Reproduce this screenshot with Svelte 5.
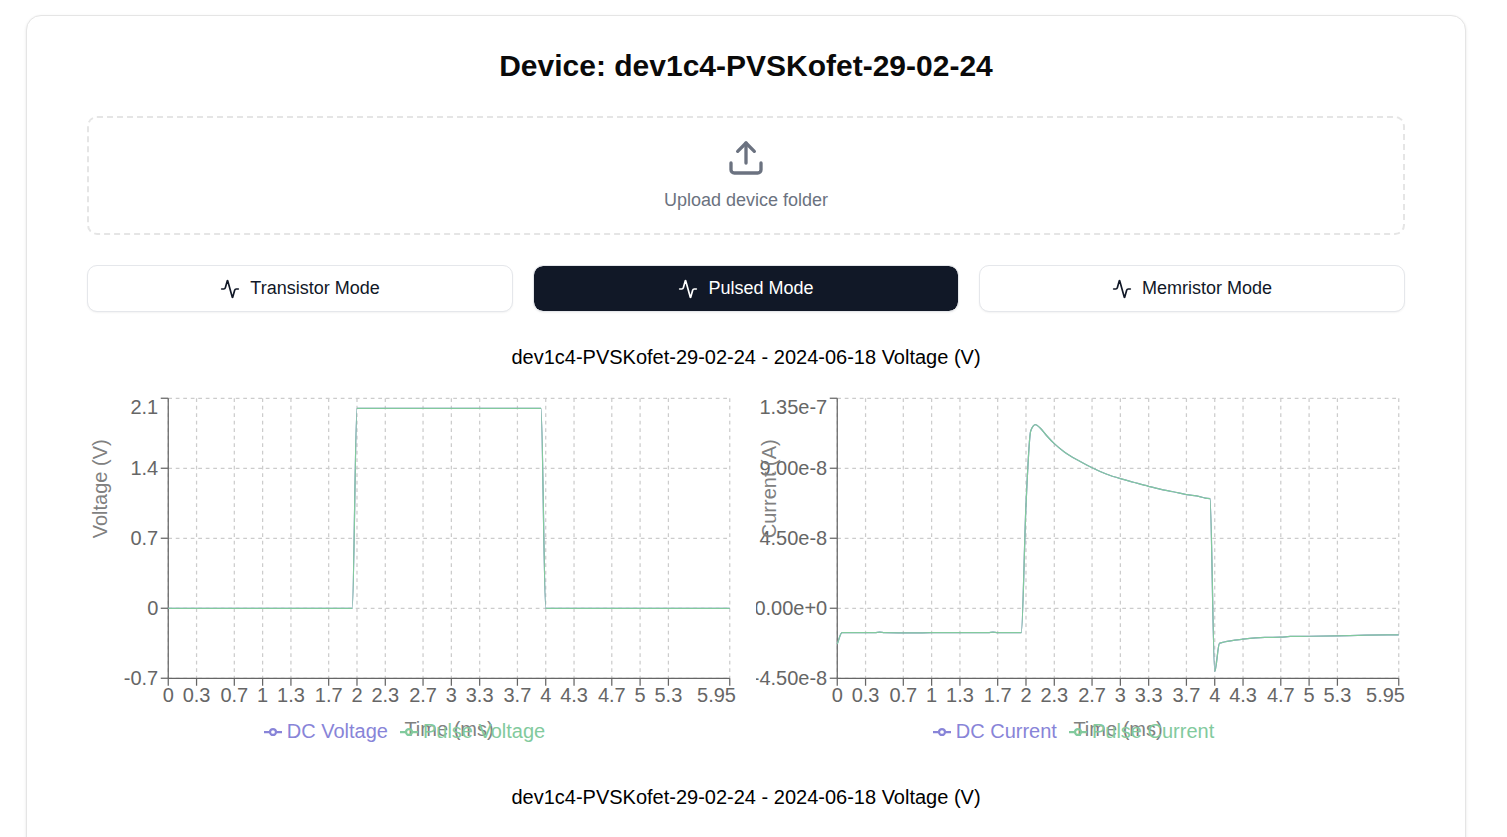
<script>
  const UNIT = 1.25;
  const CHART_HEIGHT = 300;
  const PLOT = { left: 65, top: 5, bottom: 229, right: 5 };
  const T_MAX = 5.95;
  const X_TICKS = [0, 0.3, 0.7, 1, 1.3, 1.7, 2, 2.3, 2.7, 3, 3.3, 3.7, 4, 4.3, 4.7, 5, 5.3, 5.95];

  const modes = ['Transistor Mode', 'Pulsed Mode', 'Memristor Mode'];
  let active = $state('Pulsed Mode');
  let chartWidth = $state(649);

  const charts = [
    {
      label: 'Voltage (V)',
      series: ['DC Voltage', 'Pulse Voltage'],
      min: -0.7,
      max: 2.1,
      yTicks: [[-0.7, '-0.7'], [0, '0'], [0.7, '0.7'], [1.4, '1.4'], [2.1, '2.1']],
      points: [[0, 0], [1.95, 0], [2, 2], [3.95, 2], [4, 0], [5.95, 0]]
    },
    {
      // values in units of 1e-8 A
      label: 'Current (A)',
      series: ['DC Current', 'Pulse Current'],
      min: -4.5,
      max: 13.5,
      yTicks: [[-4.5, '-4.50e-8'], [0, '0.00e+0'], [4.5, '4.50e-8'], [9, '9.00e-8'], [13.5, '1.35e-7']],
      points: [
        [0, -2.3], [0.05, -1.57], [0.4, -1.57], [0.45, -1.54], [0.5, -1.57], [0.8, -1.59],
        [1, -1.57], [1.6, -1.57], [1.65, -1.54], [1.7, -1.57], [1.95, -1.57], [2, 6.64],
        [2.05, 11.4], [2.1, 11.8], [2.15, 11.59], [2.22, 11.09], [2.3, 10.58], [2.41, 10.03],
        [2.57, 9.45], [2.7, 9.03], [2.85, 8.63], [3, 8.33], [3.14, 8.1], [3.3, 7.84],
        [3.42, 7.66], [3.56, 7.49], [3.7, 7.3], [3.84, 7.18], [3.9, 7.08], [3.95, 7.05],
        [4, -4.07], [4.05, -2.25], [4.1, -2.17], [4.3, -1.99], [4.53, -1.87], [4.7, -1.86],
        [4.8, -1.81], [5, -1.8], [5.3, -1.77], [5.6, -1.73], [5.95, -1.71]
      ]
    }
  ];

  const width = $derived(chartWidth / UNIT);
  const plotRight = $derived(width - PLOT.right);

  const sx = (t) => PLOT.left + (t / T_MAX) * (plotRight - PLOT.left);
  const sy = (v, c) => PLOT.bottom - ((v - c.min) / (c.max - c.min)) * (PLOT.bottom - PLOT.top);

  // Monotone cubic interpolation through the samples
  function curve(c) {
    const p = c.points.map(([t, v]) => [sx(t), sy(v, c)]);
    const n = p.length;
    const slope = (i) => (p[i + 1][1] - p[i][1]) / (p[i + 1][0] - p[i][0]);
    const tangents = p.map((_, i) => {
      if (i === 0) return slope(0);
      if (i === n - 1) return slope(n - 2);
      const a = slope(i - 1);
      const b = slope(i);
      if (a * b <= 0) return 0;
      const ha = p[i][0] - p[i - 1][0];
      const hb = p[i + 1][0] - p[i][0];
      const mid = Math.abs((a * hb + b * ha) / (ha + hb));
      return 2 * Math.sign(a) * Math.min(Math.abs(a), Math.abs(b), mid / 2);
    });
    let d = `M${p[0][0]},${p[0][1]}`;
    for (let i = 0; i < n - 1; i++) {
      const h = (p[i + 1][0] - p[i][0]) / 3;
      d += `C${p[i][0] + h},${p[i][1] + tangents[i] * h},${p[i + 1][0] - h},${p[i + 1][1] - tangents[i + 1] * h},${p[i + 1][0]},${p[i + 1][1]}`;
    }
    return d;
  }
</script>

<main class="page">
  <div class="card">
    <h1>Device: dev1c4-PVSKofet-29-02-24</h1>

    <label class="dropzone">
      <input type="file" multiple />
      <svg class="upload" viewBox="0 0 24 24" aria-hidden="true">
        <path d="M21 15v4a2 2 0 0 1-2 2H5a2 2 0 0 1-2-2v-4" />
        <polyline points="17 8 12 3 7 8" />
        <line x1="12" x2="12" y1="3" y2="15" />
      </svg>
      <span>Upload device folder</span>
    </label>

    <div class="modes">
      {#each modes as mode}
        <button type="button" class:active={active === mode} onclick={() => (active = mode)}>
          <svg class="pulse" viewBox="0 0 24 24" aria-hidden="true">
            <path d="M22 12h-2.48a2 2 0 0 0-1.93 1.46l-2.35 8.36a.25.25 0 0 1-.48 0L9.24 2.18a.25.25 0 0 0-.48 0l-2.35 8.36A2 2 0 0 1 4.49 12H2" />
          </svg>
          {mode}
        </button>
      {/each}
    </div>

    <section>
      <h2>dev1c4-PVSKofet-29-02-24 - 2024-06-18 Voltage (V)</h2>
      <div class="charts">
        {#each charts as c}
          <div class="chart" bind:clientWidth={chartWidth}>
            <svg class="plot" viewBox="0 0 {width} {CHART_HEIGHT}">
              <g class="grid">
                {#each c.yTicks as [v]}
                  <line x1={PLOT.left} x2={plotRight} y1={sy(v, c)} y2={sy(v, c)} />
                {/each}
                {#each X_TICKS as t}
                  <line x1={sx(t)} x2={sx(t)} y1={PLOT.top} y2={PLOT.bottom} />
                {/each}
              </g>
              <g class="axis">
                <line x1={PLOT.left} x2={plotRight} y1={PLOT.bottom} y2={PLOT.bottom} />
                <line x1={PLOT.left} x2={PLOT.left} y1={PLOT.top} y2={PLOT.bottom} />
                {#each X_TICKS as t}
                  <line x1={sx(t)} x2={sx(t)} y1={PLOT.bottom} y2={PLOT.bottom + 6} />
                  <text
                    x={t === T_MAX ? width : sx(t)}
                    y={PLOT.bottom + 8}
                    dy="0.71em"
                    text-anchor={t === T_MAX ? 'end' : 'middle'}>{t}</text>
                {/each}
                {#each c.yTicks as [v, label]}
                  <line x1={PLOT.left - 6} x2={PLOT.left} y1={sy(v, c)} y2={sy(v, c)} />
                  <text
                    x={PLOT.left - 8}
                    y={Math.max(sy(v, c), 12)}
                    dy="0.355em"
                    text-anchor="end">{label}</text>
                {/each}
              </g>
              <g class="axis-label">
                <text x={(PLOT.left + plotRight) / 2} y="275" text-anchor="middle">Time (ms)</text>
                <text transform="translate(16 117) rotate(-90)">{c.label}</text>
              </g>
              <path class="series dc" d={curve(c)} />
              <path class="series pulsed" d={curve(c)} />
            </svg>
            <ul class="legend">
              {#each c.series as name, i}
                <li class={i === 0 ? 'dc' : 'pulsed'}>
                  <svg viewBox="0 0 32 32" aria-hidden="true">
                    <path d="M0,16h10.667A5.333,5.333,0,1,1,21.333,16H32M21.333,16A5.333,5.333,0,1,1,10.667,16" />
                  </svg>
                  {name}
                </li>
              {/each}
            </ul>
          </div>
        {/each}
      </div>
    </section>

    <section>
      <h2>dev1c4-PVSKofet-29-02-24 - 2024-06-18 Voltage (V)</h2>
    </section>
  </div>
</main>

<style>
  :global(body) {
    background: #fff;
  }
  .page {
    box-sizing: border-box;
    padding: 15px 15px 0 0;
    font-family: 'Liberation Sans', Arial, sans-serif;
    font-size: 20px;
    line-height: 30px;
    color: #0a0a0a;
  }
  .card {
    box-sizing: border-box;
    max-width: 1440px;
    margin: 0 auto;
    padding: 30px 60px 60px;
    border: 1px solid #e5e5e5;
    border-radius: 15px;
    background: #fff;
    box-shadow: 0 1px 3px rgba(0, 0, 0, 0.1);
  }
  h1 {
    margin: 0 0 30px;
    font-size: 30px;
    line-height: 40px;
    font-weight: 700;
    text-align: center;
  }
  .dropzone {
    position: relative;
    display: flex;
    flex-direction: column;
    align-items: center;
    gap: 10px;
    padding: 20px;
    border: 2px dashed #e5e5e5;
    border-radius: 10px;
    font-size: 18px;
    line-height: 25px;
    color: #6b7280;
    cursor: pointer;
  }
  .dropzone input {
    position: absolute;
    width: 1px;
    height: 1px;
    opacity: 0;
  }
  .upload,
  .pulse {
    fill: none;
    stroke: currentColor;
    stroke-width: 2;
    stroke-linecap: round;
    stroke-linejoin: round;
  }
  .upload {
    width: 40px;
    height: 40px;
  }
  .modes {
    display: grid;
    grid-template-columns: repeat(3, 1fr);
    gap: 20px;
    margin: 30px 0;
  }
  button {
    display: flex;
    align-items: center;
    justify-content: center;
    gap: 10px;
    padding: 10px 20px;
    border: 1px solid #e5e7eb;
    border-radius: 10px;
    background: #fff;
    background-clip: padding-box;
    box-shadow: 0 1px 2px rgba(0, 0, 0, 0.05);
    font-family: inherit;
    font-size: 18px;
    line-height: 25px;
    color: #111827;
    cursor: pointer;
  }
  button.active {
    background-color: #111827;
    color: #fff;
  }
  .pulse {
    width: 20px;
    height: 20px;
  }
  h2 {
    margin: 0;
    font-size: 20px;
    line-height: 30px;
    font-weight: 400;
    text-align: center;
    color: #000;
  }
  section + section {
    margin-top: 15px;
  }
  .charts {
    display: grid;
    grid-template-columns: repeat(2, minmax(0, 1fr));
    gap: 20px;
    margin-top: 20px;
  }
  .chart {
    position: relative;
  }
  .plot {
    display: block;
    width: 100%;
    overflow: hidden;
    font-size: 16px;
  }
  .grid line {
    stroke: #ccc;
    stroke-dasharray: 3 3;
  }
  .axis line {
    stroke: #666;
  }
  .axis text {
    fill: #666;
  }
  .axis-label text {
    fill: #808080;
  }
  .series {
    fill: none;
    stroke: currentColor;
    stroke-width: 1;
  }
  .dc {
    color: #8884d8;
  }
  .pulsed {
    color: #82ca9d;
  }
  .legend {
    position: absolute;
    right: 14px;
    bottom: 21px;
    left: 0;
    display: flex;
    justify-content: center;
    gap: 12px;
    margin: 0;
    padding: 0;
    list-style: none;
  }
  .legend li {
    display: flex;
    align-items: center;
    gap: 5px;
  }
  .legend svg {
    width: 18px;
    height: 18px;
    margin-top: 2px;
    fill: none;
    stroke: currentColor;
    stroke-width: 4;
  }
</style>
